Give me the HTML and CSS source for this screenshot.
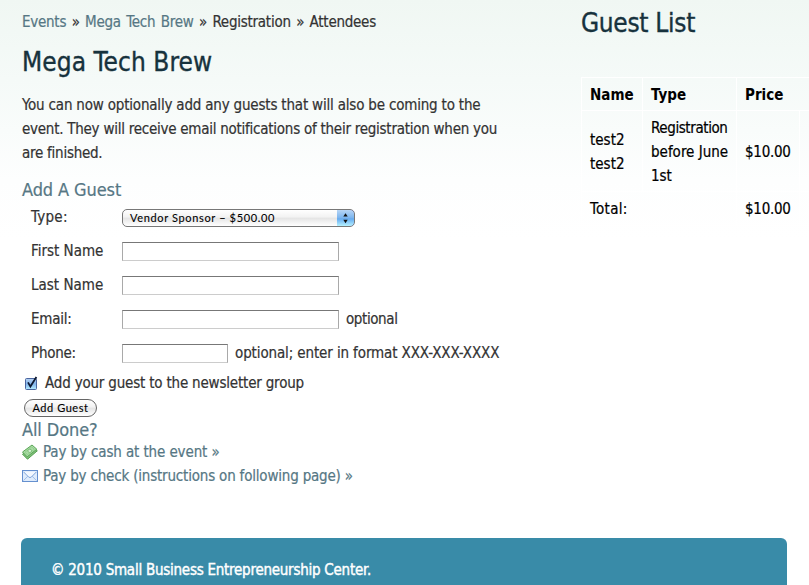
FILE: index.html
```html
<!DOCTYPE html>
<html lang="en">
<head>
<meta charset="utf-8">
<title>Mega Tech Brew - Registration</title>
<link rel="stylesheet" href="styles.css">
</head>
<body>
<div class="page">
  <main class="main">
    <nav class="crumbs"><a href="#">Events</a> » <a href="#">Mega Tech Brew</a> » Registration » Attendees</nav>
    <h1>Mega Tech Brew</h1>
    <p class="intro"><span class="snug">You can now optionally add any guests that will also be coming to the</span><br><span class="tight">event. They will receive email notifications of their registration when you</span><br><span class="tight">are finished.</span></p>
    <h3>Add A Guest</h3>
    <form class="form">
      <div class="row"><label class="loose">Type:</label>
        <div class="select">Vendor Sponsor – $500.00<i class="arrows"><svg width="17" height="18" viewBox="0 0 17 18"><path d="M8.5 4.2l2.2 3.4H6.3zM8.5 14.2l2.2-3.4H6.3z" fill="#111"/></svg></i></div></div>
      <div class="row"><label>First Name</label><input type="text"></div>
      <div class="row"><label>Last Name</label><input type="text"></div>
      <div class="row"><label class="tight">Email:</label><input type="text"><span class="hint tighter">optional</span></div>
      <div class="row"><label class="tight">Phone:</label><input class="short" type="text"><span class="hint near">optional; enter in format XXX-XXX-XXXX</span></div>
      <div class="check snug"><svg class="box" width="15" height="15" viewBox="0 0 15 15"><defs><linearGradient id="cb" x1="0" y1="0" x2="0" y2="1"><stop offset="0" stop-color="#b9d3f2"/><stop offset=".5" stop-color="#82b4ec"/><stop offset="1" stop-color="#b4ecff"/></linearGradient></defs><rect x="1.5" y="2.5" width="11" height="11" rx="1" fill="url(#cb)" stroke="#4a659f"/><path d="M4 6.4l2.4 4.2L12.4 1" fill="none" stroke="#0c1830" stroke-width="1.8"/></svg>Add your guest to the newsletter group</div>
      <button class="btn" type="button">Add Guest</button>
    </form>
    <h3 class="done">All Done?</h3>
    <a class="pay near" href="#"><svg width="16" height="16" viewBox="0 0 16 16"><path d="M.5 10.2L11 3.2l4.3 3.6L5.5 15.2z" fill="#7fbf7a" stroke="#55a050"/><path d="M.5 8L10 1l4.8 4.2L5.2 12.8z" fill="#a9dba4" stroke="#5aa556"/><path d="M3 8.2L9.8 3l2.6 2.3-7 5.4z" fill="none" stroke="#8acb85" stroke-width=".8"/><ellipse cx="7.8" cy="6.9" rx="1.9" ry="1.6" fill="#d3efd0" stroke="#6bb266" stroke-width=".7"/></svg>Pay by cash at the event »</a>
    <a class="pay snug" href="#"><svg width="16" height="16" viewBox="0 0 16 16"><rect x=".5" y="2.5" width="15" height="11" fill="#dfecfc" stroke="#6590cf"/><path d="M1.5 12.5l4.3-4.2M14.5 12.5l-4.3-4.2" stroke="#a0bfe8" fill="none"/><path d="M1.5 3.8L6.6 9q1.4 1.2 2.8 0l5.1-5.2" fill="#f3f8ff" stroke="#7fa6dc"/></svg>Pay by check (instructions on following page) »</a>
  </main>
  <aside class="side">
    <h2>Guest List</h2>
    <div class="guests">
      <div class="cell th">Name</div><div class="cell th">Type</div><div class="cell th wide">Price</div>
      <div class="cell"><span>test2</span><span>test2</span></div><div class="cell"><span class="tighter">Registration</span><span>before June</span><span>1st</span></div><div class="cell tight">$10.00</div><div class="cell"></div>
      <div class="cell total">Total:</div><div class="cell last tight">$10.00</div><div class="cell last"></div>
    </div>
  </aside>
</div>
<footer class="footer tight">© 2010 Small Business Entrepreneurship Center.</footer>
</body>
</html>
```
FILE: styles.css
```css
* { box-sizing: border-box; }
body {
  margin: 0;
  height: 585px;
  overflow: hidden;
  background: linear-gradient(#f0f7f3 0, #f5faf8 80px, #fdfefe 180px, #fff 240px) #fff;
  color: #333;
  font: 15px/24px "DejaVu Sans Condensed", "DejaVu Sans", sans-serif;
  font-stretch: condensed;
  -webkit-text-stroke-width: .2px;
}
a { color: #567784; text-decoration: none; }

/* letter fitting */
.near { letter-spacing: -.12px; }
.snug { letter-spacing: -.19px; }
.tight { letter-spacing: -.25px; }
.tighter { letter-spacing: -.4px; }
.loose { letter-spacing: .3px; }

.page { display: flex; height: 538px; }
.main { width: 559px; flex: none; margin-left: 22px; padding-top: 10px; white-space: nowrap; }
h1, h2, h3, p { margin: 0; font-weight: normal; }
.crumbs { height: 24px; letter-spacing: -.25px; word-spacing: 1.4px; }
h1, h2 { font-size: 26px; line-height: 36px; color: #17323d; -webkit-text-stroke-width: .35px; }
h1 { margin-top: 10px; letter-spacing: .07px; }
h2 { letter-spacing: -.3px; }
.intro { margin-top: 13px; }
h3 { font-size: 18px; line-height: 24px; color: #567784; margin-top: 13px; height: 22px; letter-spacing: -.1px; }
.row { display: flex; align-items: center; height: 34px; }
.row label { width: 100px; padding-left: 9px; }
.select {
  position: relative; display: flex; width: 233px; height: 18px; padding-left: 7px; margin-top: 2px;
  border: 1px solid #777; border-radius: 5px; overflow: hidden;
  background: linear-gradient(#fff, #f2f2f2 45%, #e4e4e4 50%, #fff);
  font: 11px/16px Lato, sans-serif; color: #000; letter-spacing: .64px; -webkit-text-stroke-width: .1px;
}
.arrows { position: absolute; right: -1px; top: -1px; width: 18px; height: 18px; background: linear-gradient(#b8d6f6, #7ab4ee 50%, #64aaf0 55%, #b6f2ff); border: 1px solid #3b3f9e; border-left: 0; border-radius: 0 5px 5px 0; }
.arrows svg { display: block; margin: -1px 0 0; }
input { width: 217px; height: 19px; margin: 0; border: 1px solid #a9a9a9; border-top-color: #777; border-bottom-color: #ccc; background: #fff; }
.short { width: 106px; }
.hint { margin-left: 7px; }
.check { display: flex; height: 26px; line-height: 24px; align-items: center; }
.box { margin: 0 6px 0 2px; }
.btn { display: block; width: 73px; height: 18px; margin: 3px 0 0 2px; padding: 0; border: 1px solid #666; border-radius: 9px; background: linear-gradient(#fff, #f2f2f2 45%, #e4e4e4 50%, #fff); font: 11px/16px Lato, sans-serif; color: #000; letter-spacing: .55px; -webkit-text-stroke-width: .1px; }
.done { margin-top: 1px; }
.pay { display: flex; align-items: center; height: 24px; }
.pay svg { margin-right: 5px; }
.side { width: 228px; padding-top: 5px; white-space: nowrap; }
.guests { display: grid; grid-template-columns: 61px 94px 63px 10px; grid-template-rows: 33px 81px 34px; margin-top: 36px; border: solid #fff; border-width: 1px 0 0 1px; color: #000; }
.cell { display: flex; flex-direction: column; justify-content: center; padding: 2px 0 0 8px; border: solid #fff; border-width: 0 1px 1px 0; }
.th { font-weight: bold; -webkit-text-stroke-width: 0; }
.wide, .total { grid-column: span 2; }
.total, .last { padding-top: 0; }
.total { letter-spacing: .3px; }
.footer { height: 60px; width: 766px; margin-left: 21px; padding: 20px 0 0 30px; border-radius: 6px 6px 0 0; background: #398ba8; color: #fff; -webkit-text-stroke-width: .4px; }
```
